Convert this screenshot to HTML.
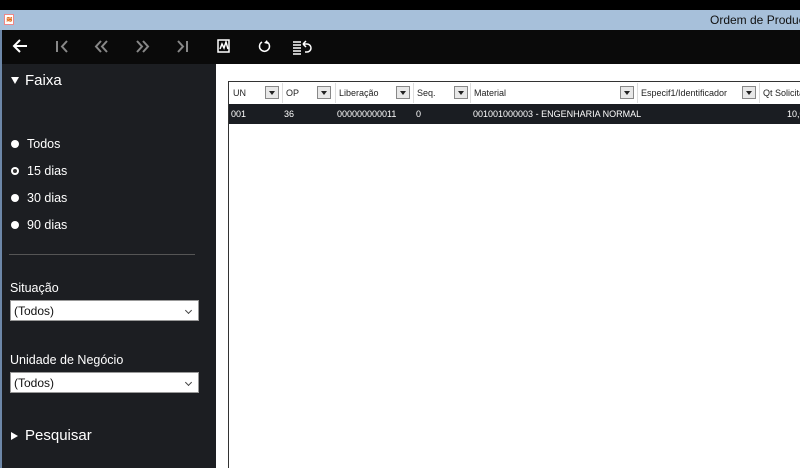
<!DOCTYPE html>
<html><head><meta charset="utf-8"><style>
*{margin:0;padding:0;box-sizing:border-box}
body{width:800px;height:468px;overflow:hidden;background:#fff;font-family:"Liberation Sans",sans-serif;position:relative}
.abs{position:absolute;white-space:nowrap}
.t{color:#fff;font-size:12.5px}
.h{font-size:9px;color:#222;top:88px}
.dd{position:absolute;top:86px;width:14px;height:13px;border:1px solid #888;background:#e8e8e8}
.dd:after{content:"";position:absolute;left:3px;top:4px;border-left:3px solid transparent;border-right:3px solid transparent;border-top:4px solid #222}
.sep{position:absolute;top:83px;width:1px;height:20px;background:#ddd}
.r{font-size:9px;color:#fff;top:109px}
.rad{position:absolute;left:11px;width:8px;height:8px;border-radius:50%;background:#fff}
.sel{position:absolute;left:10px;width:189px;height:21px;background:#fff;border:1px solid #999;font-size:12px;color:#111;padding:3px 3px}
.sel:after{content:"";position:absolute;right:7px;top:7px;width:4px;height:4px;border-right:1px solid #444;border-bottom:1px solid #444;transform:rotate(45deg)}
</style></head><body>
<div class="abs" style="left:0;top:0;width:800px;height:10px;background:#000"></div>
<div class="abs" style="left:0;top:10px;width:800px;height:20px;background:#a7c0da"></div>
<div class="abs" style="left:4px;top:14px;width:10px;height:11px;background:#fff;border:1px solid #e88"><span style="position:absolute;left:1px;top:0;color:#e05a00;font-size:8px;font-weight:bold">≋</span></div>
<div class="abs" style="left:710px;top:13px;font-size:12px;color:#111">Ordem de Produc</div>
<div class="abs" style="left:0;top:30px;width:2px;height:438px;background:#6d87a8"></div>
<div class="abs" style="left:2px;top:30px;width:798px;height:34px;background:#0a0a0a"></div>
<div class="abs" style="left:2px;top:64px;width:214px;height:404px;background:#1c1e22"></div>
<svg class="abs" style="left:0;top:30px" width="330" height="34">
<g stroke="#fff" stroke-width="2" fill="none">
<path d="M14 16h13M20 10l-6 6 6 6"/>
</g>
<g stroke="#888" stroke-width="2" fill="none">
<path d="M57 11v11M67 11l-5 5.5 5 5.5"/>
<path d="M101 11l-5 5.5 5 5.5M107 11l-5 5.5 5 5.5"/>
<path d="M137 11l5 5.5-5 5.5M143 11l5 5.5-5 5.5"/>
<path d="M178 11l5 5.5-5 5.5M187 11v11"/>
</g>
<g stroke="#fff" stroke-width="1.5" fill="none">
<rect x="218" y="10" width="11" height="12"/><path d="M220 19l2-5 2 4 2-6 2 7"/>
<path d="M262 12a5 5 0 1 0 5 0"/>
<path d="M293 12h8M293 15h8M293 18h8M293 21h8M293 24h8M303 14l3-3M303 14l3 3M304 14h3a4 4 0 0 1 0 8h-2"/>
</g>
<path d="M267 10l1 4-4-1z" fill="#fff"/>
</svg>
<div class="abs" style="left:11px;top:77px;border-left:4px solid transparent;border-right:4px solid transparent;border-top:7px solid #fff"></div>
<div class="abs" style="left:25px;top:72px;font-size:15px;color:#fff">Faixa</div>
<div class="rad" style="top:140px"></div><div class="abs t" style="left:27px;top:137px">Todos</div>
<div class="rad" style="top:167px"><div style="position:absolute;left:2px;top:2px;width:4px;height:4px;border-radius:50%;background:#333"></div></div><div class="abs t" style="left:27px;top:164px">15 dias</div>
<div class="rad" style="top:194px"></div><div class="abs t" style="left:27px;top:191px">30 dias</div>
<div class="rad" style="top:221px"></div><div class="abs t" style="left:27px;top:218px">90 dias</div>
<div class="abs" style="left:9px;top:254px;width:186px;height:1px;background:#555"></div>
<div class="abs t" style="left:10px;top:281px">Situação</div>
<div class="sel" style="top:300px">(Todos)</div>
<div class="abs t" style="left:10px;top:353px">Unidade de Negócio</div>
<div class="sel" style="top:372px">(Todos)</div>
<div class="abs" style="left:11px;top:432px;border-top:4px solid transparent;border-bottom:4px solid transparent;border-left:7px solid #fff"></div>
<div class="abs" style="left:25px;top:427px;font-size:15px;color:#fff">Pesquisar</div>
<div class="abs" style="left:228px;top:81px;width:572px;height:387px;border-left:1px solid #333;border-top:1px solid #333;background:#fff"></div>
<div class="abs" style="left:229px;top:104px;width:571px;height:20px;background:#1a1d22"></div>
<div class="sep" style="left:282px"></div><div class="sep" style="left:335px"></div><div class="sep" style="left:413px"></div><div class="sep" style="left:470px"></div><div class="sep" style="left:637px"></div><div class="sep" style="left:759px"></div>
<div class="abs h" style="left:233px">UN</div><div class="dd" style="left:265px"></div>
<div class="abs h" style="left:286px">OP</div><div class="dd" style="left:317px"></div>
<div class="abs h" style="left:339px">Liberação</div><div class="dd" style="left:396px"></div>
<div class="abs h" style="left:417px">Seq.</div><div class="dd" style="left:454px"></div>
<div class="abs h" style="left:474px">Material</div><div class="dd" style="left:620px"></div>
<div class="abs h" style="left:641px">Especif1/Identificador</div><div class="dd" style="left:742px"></div>
<div class="abs h" style="left:763px">Qt Solicitada</div>
<div class="abs r" style="left:231px">001</div>
<div class="abs r" style="left:284px">36</div>
<div class="abs r" style="left:337px">000000000011</div>
<div class="abs r" style="left:416px">0</div>
<div class="abs r" style="left:473px">001001000003 - ENGENHARIA NORMAL</div>
<div class="abs r" style="left:787px">10,0</div>
</body></html>
